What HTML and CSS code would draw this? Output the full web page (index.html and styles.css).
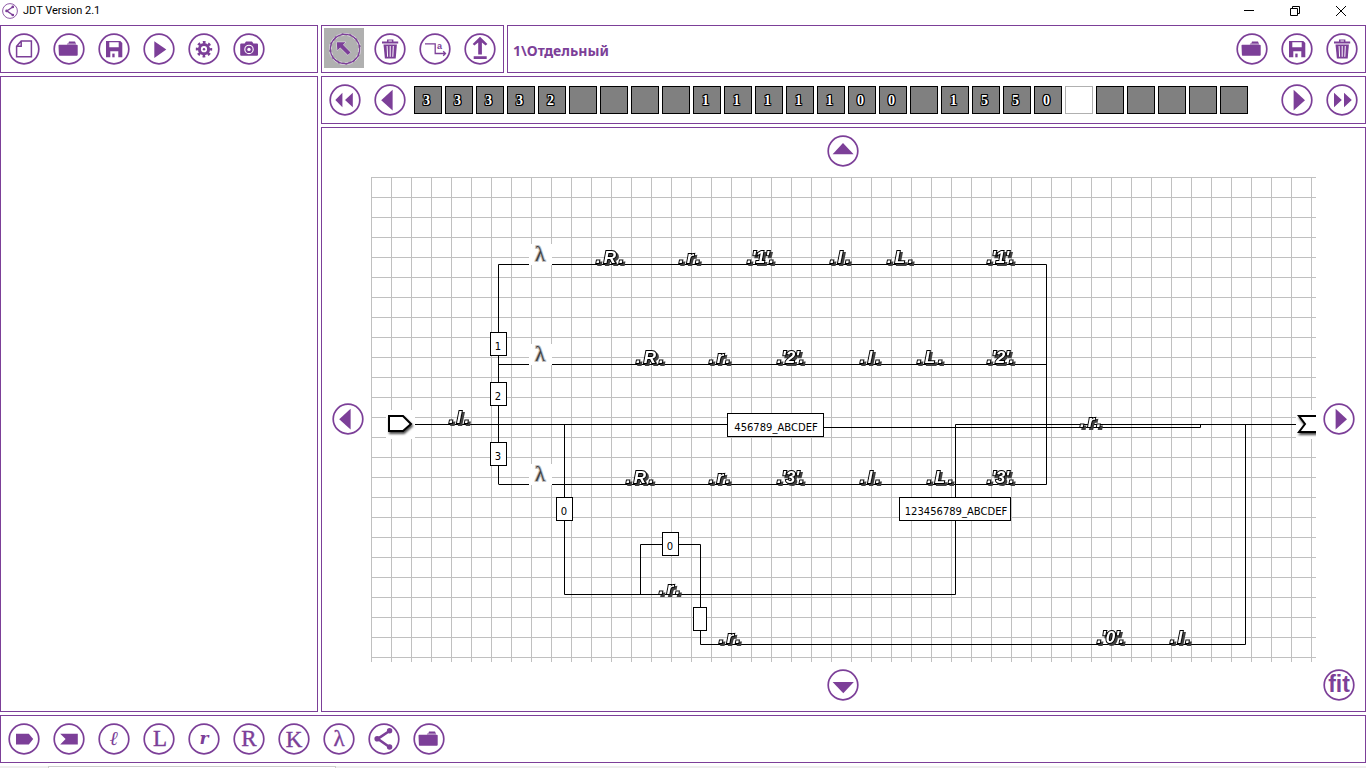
FILE: index.html
```html
<!DOCTYPE html>
<html lang="ru">
<head>
<meta charset="utf-8">
<title>JDT Version 2.1</title>
<link rel="stylesheet" href="styles.css">
</head>
<body>
<svg class="sprite" aria-hidden="true">
  <symbol id="ring" viewBox="0 0 32 32"><circle class="line" cx="16" cy="16" r="14.8" stroke-width="1.7"/></symbol>
  <symbol id="file" viewBox="0 0 32 32"><path class="line" stroke-width="1.5" d="M8.6 13.2 13.2 8H23.4V23.8H8.6ZM13.2 8V13.2H8.6"/></symbol>
  <symbol id="folder" viewBox="0 0 32 32"><path d="M5.5 12.5Q5.5 11.7 6.3 11.7H23.8Q24.7 11.7 24.7 12.5V21.8Q24.7 22.8 23.8 22.8H6.8Q5.9 22.8 5.9 21.8Z"/><path opacity=".6" d="M14.3 10.2H23V11.7H13.8Z"/><path d="M15.3 10.4 16 8.6H22L22.8 10.4Z"/></symbol>
  <symbol id="save" viewBox="0 0 32 32"><path fill-rule="evenodd" d="M8 8H22.3L24.3 10V24.3H8ZM11.3 9.3V14.3H20.7V9.3ZM12.3 18.3V24.3H20.3V18.3Z"/><path d="M14.3 20.6H16.6V24.3H14.3Z"/></symbol>
  <symbol id="play" viewBox="0 0 32 32"><path d="M11.3 8.2 23.3 16.6 11.3 25Z"/></symbol>
  <symbol id="gear" viewBox="0 0 32 32"><circle class="line" cx="16" cy="16.2" r="4.6" stroke-width="3"/><circle class="line" cx="16" cy="16.2" r="6.9" stroke-width="2.6" stroke-dasharray="2.7 2.72" stroke-dashoffset="1.35"/><circle cx="16" cy="16.2" r="1.2"/></symbol>
  <symbol id="camera" viewBox="0 0 32 32"><path d="M7.2 11.6Q7.2 10.6 8.2 10.6H11.6L13 8.6H19L20.4 10.6H24Q25 10.6 25 11.6V21.8Q25 22.8 24 22.8H8.2Q7.2 22.8 7.2 21.8Z"/><circle cx="16" cy="16.4" r="4.2" fill="none" stroke="#fff" stroke-width="1.1"/><circle cx="16" cy="16.4" r="1.7" fill="#fff"/></symbol>
  <symbol id="cursor" viewBox="0 0 32 32"><circle cx="16" cy="16" r="15.7" fill="none" stroke="#fff" stroke-width=".6" stroke-dasharray="6 2"/><circle cx="16" cy="16" r="13.6" fill="none" stroke="#fff" stroke-width=".5" stroke-dasharray="3 3"/><path d="M7.7 9.2H16.6L14 11.8 21.6 19.4 18.9 22.1 11.2 14.5 8.4 17.4Z" stroke="#fff" stroke-width=".8" paint-order="stroke"/></symbol>
  <symbol id="trash" viewBox="0 0 32 32"><path d="M8 8.6H13V6.4H19.4V8.6H24.2V10.6H8ZM14.5 7.6V8.6H17.9V7.6Z" fill-rule="evenodd"/><path d="M9.5 11.6H22.9L21.7 25.4H10.9Z"/><path d="M13.1 13 13.6 23.8M16.2 13V23.8M19.3 13 18.8 23.8" fill="none" stroke="#fff" stroke-width="1"/></symbol>
  <symbol id="wire" viewBox="0 0 32 32"><path class="line" stroke-width="1.3" d="M6 10.8H16.2V20.5H26M24.2 18.3 26.5 20.5 24.2 22.7"/></symbol>
  <symbol id="upload" viewBox="0 0 32 32"><path d="M16 3.8 23.4 11 21.6 12.4 17.9 9.4V21.6H14.2V9.4L10.4 12.4 8.7 11ZM9.7 23.2H22.7V26H9.7Z"/></symbol>
  <symbol id="rewind" viewBox="0 0 32 32"><path d="M6.3 16 13.4 8.8V23.2ZM16 16 23.8 8.8V23.2Z"/></symbol>
  <symbol id="forward" viewBox="0 0 32 32"><path d="M8 8.8 15.8 16 8 23.2ZM18 8.8 25.8 16 18 23.2Z"/></symbol>
  <symbol id="left" viewBox="0 0 32 32"><path d="M18.6 5.8V26.6L7.2 16.2Z"/></symbol>
  <symbol id="right" viewBox="0 0 32 32"><path d="M12.6 5.8V26.6L24 16.2Z"/></symbol>
  <symbol id="up" viewBox="0 0 32 32"><path d="M5.6 19.2H26.6L16 8Z"/></symbol>
  <symbol id="down" viewBox="0 0 32 32"><path d="M5.6 13H26.8L16.3 24.2Z"/></symbol>
  <symbol id="entry" viewBox="0 0 32 32"><path d="M8 10.8H20.8L25.2 16 20.8 21.4H8Z"/></symbol>
  <symbol id="exit" viewBox="0 0 32 32"><path d="M7.2 10.8H24.8V21.4H7.2L12.6 16Z"/></symbol>
  <symbol id="share" viewBox="0 0 32 32"><path class="line" stroke-width="2.6" d="M21.4 8 9.7 15.8 21.4 24"/><circle cx="9.2" cy="15.8" r="2.8"/><circle cx="21.6" cy="7.8" r="2.7"/><circle cx="21.6" cy="24" r="2.7"/></symbol>
</svg>

<header class="titlebar">
  <svg class="app-icon" aria-hidden="true"><use href="#ring"/><use href="#share"/></svg>
  <h1 class="app-title">JDT Version 2.1</h1>
  <div class="window-controls">
    <button class="window-btn" aria-label="Свернуть"><svg class="window-glyph"><path d="M0 4.5H10"/></svg></button>
    <button class="window-btn" aria-label="Восстановить"><svg class="window-glyph"><path d="M.5 2.5H7.5V9.5H.5ZM2.5 2.5V.5H9.5V7.5H7.5"/></svg></button>
    <button class="window-btn" aria-label="Закрыть"><svg class="window-glyph"><path d="M0 0 10 10M10 0 0 10"/></svg></button>
  </div>
</header>

<main class="workspace">
  <section class="panel toolbar project-tools">
    <button class="tool" aria-label="Создать"><svg class="icon"><use href="#ring"/><use href="#file"/></svg></button>
    <button class="tool" aria-label="Открыть"><svg class="icon"><use href="#ring"/><use href="#folder"/></svg></button>
    <button class="tool" aria-label="Сохранить"><svg class="icon"><use href="#ring"/><use href="#save"/></svg></button>
    <button class="tool" aria-label="Запуск"><svg class="icon"><use href="#ring"/><use href="#play"/></svg></button>
    <button class="tool" aria-label="Настройки"><svg class="icon"><use href="#ring"/><use href="#gear"/></svg></button>
    <button class="tool" aria-label="Снимок"><svg class="icon"><use href="#ring"/><use href="#camera"/></svg></button>
  </section>

  <div class="top-row">
    <section class="panel toolbar">
      <button class="tool active" aria-label="Выбор" aria-pressed="true"><svg class="icon"><use href="#ring"/><use href="#cursor"/></svg></button>
      <button class="tool" aria-label="Удалить"><svg class="icon"><use href="#ring"/><use href="#trash"/></svg></button>
      <button class="tool" aria-label="Связь"><svg class="icon"><use href="#ring"/><use href="#wire"/><text class="tiny" x="18" y="16">a</text></svg></button>
      <button class="tool" aria-label="Вверх"><svg class="icon"><use href="#ring"/><use href="#upload"/></svg></button>
    </section>
    <section class="panel toolbar machine">
      <h2 class="machine-name">1\Отдельный</h2>
      <button class="tool" aria-label="Открыть машину"><svg class="icon"><use href="#ring"/><use href="#folder"/></svg></button>
      <button class="tool" aria-label="Сохранить машину"><svg class="icon"><use href="#ring"/><use href="#save"/></svg></button>
      <button class="tool" aria-label="Удалить машину"><svg class="icon"><use href="#ring"/><use href="#trash"/></svg></button>
    </section>
  </div>

  <aside class="panel tree"></aside>

  <section class="panel toolbar tape-panel">
    <button class="tool" aria-label="Быстро назад"><svg class="icon"><use href="#ring"/><use href="#rewind"/></svg></button>
    <button class="tool" aria-label="Назад"><svg class="icon"><use href="#ring"/><use href="#left"/></svg></button>
    <ol class="tape">
      <li class="cell">3</li><li class="cell">3</li><li class="cell">3</li><li class="cell">3</li><li class="cell">2</li>
      <li class="cell"></li><li class="cell"></li><li class="cell"></li><li class="cell"></li>
      <li class="cell">1</li><li class="cell">1</li><li class="cell">1</li><li class="cell">1</li><li class="cell">1</li>
      <li class="cell">0</li><li class="cell">0</li><li class="cell"></li><li class="cell">1</li>
      <li class="cell">5</li><li class="cell">5</li><li class="cell">0</li><li class="cell head"></li>
      <li class="cell"></li><li class="cell"></li><li class="cell"></li><li class="cell"></li><li class="cell"></li>
    </ol>
    <button class="tool" aria-label="Вперёд"><svg class="icon"><use href="#ring"/><use href="#right"/></svg></button>
    <button class="tool" aria-label="Быстро вперёд"><svg class="icon"><use href="#ring"/><use href="#forward"/></svg></button>
  </section>

  <section class="panel editor">
    <button class="tool pan pan-up" aria-label="Сдвиг вверх"><svg class="icon"><use href="#ring"/><use href="#up"/></svg></button>
    <button class="tool pan pan-left" aria-label="Сдвиг влево"><svg class="icon"><use href="#ring"/><use href="#left"/></svg></button>
    <div class="canvas">
      <svg class="diagram" role="img" aria-label="Диаграмма машины">
        <path class="wires" d="M44 247.5H356M127.5 307V87.5H675.5V307.5H127.5M127 187.5H675M453 250.5H829.5V247M193.5 247V417.5H584.5V247.5H925M269.5 417V367.5H329.5V467.5H874.5V247"/>

        <g class="boxes">
          <rect x="119.5" y="155.5" width="16" height="23"/>
          <rect x="119.5" y="205.5" width="16" height="23"/>
          <rect x="119.5" y="265.5" width="16" height="23"/>
          <rect x="185.5" y="320.5" width="16" height="23"/>
          <rect x="291.5" y="355.5" width="16" height="23"/>
          <rect x="322.5" y="430.5" width="13" height="23"/>
          <rect x="356.5" y="236.5" width="96" height="23"/>
          <rect x="528.5" y="320.5" width="111" height="23"/>
        </g>
        <g class="box-text">
          <text x="127" y="173">1</text>
          <text x="127" y="223">2</text>
          <text x="127" y="283">3</text>
          <text x="193" y="338">0</text>
          <text x="299" y="373">0</text>
          <text x="405" y="254">456789_ABCDEF</text>
          <text x="585" y="338">123456789_ABCDEF</text>
        </g>

        <g class="patches">
          <rect x="158" y="67" width="23" height="21"/>
          <rect x="158" y="167" width="23" height="21"/>
          <rect x="158" y="287" width="23" height="21"/>
          <rect x="15" y="233" width="29" height="29"/>
          <rect x="925" y="233" width="20" height="29"/>
        </g>
        <g class="lambdas">
          <text x="169" y="84">λ</text>
          <text x="169" y="184">λ</text>
          <text x="169" y="304">λ</text>
        </g>
        <path class="terminal" d="M18 239H32L40 247 32 254H18Z"/>
        <path class="terminal" d="M950 239H928L934 247 928 255H950"/>

        <g class="ops">
          <text x="225" y="86">.<tspan dx="3">R</tspan><tspan dx="3">.</tspan></text>
          <text x="308" y="86">.<tspan dx="3">r</tspan><tspan dx="3">.</tspan></text>
          <text x="376" y="86">.'1'.</text>
          <text x="459" y="86">.<tspan dx="3">l</tspan><tspan dx="3">.</tspan></text>
          <text x="516" y="86">.<tspan dx="3">L</tspan><tspan dx="3">.</tspan></text>
          <text x="616" y="86">.'1'.</text>

          <text x="265" y="186">.<tspan dx="3">R</tspan><tspan dx="3">.</tspan></text>
          <text x="338" y="186">.<tspan dx="3">r</tspan><tspan dx="3">.</tspan></text>
          <text x="406" y="186">.'2'.</text>
          <text x="489" y="186">.<tspan dx="3">l</tspan><tspan dx="3">.</tspan></text>
          <text x="546" y="186">.<tspan dx="3">L</tspan><tspan dx="3">.</tspan></text>
          <text x="616" y="186">.'2'.</text>

          <text x="78" y="246">.<tspan dx="3">l</tspan><tspan dx="3">.</tspan></text>
          <text x="709" y="250">.<tspan dx="3">r</tspan><tspan dx="3">.</tspan></text>

          <text x="255" y="306">.<tspan dx="3">R</tspan><tspan dx="3">.</tspan></text>
          <text x="338" y="306">.<tspan dx="3">r</tspan><tspan dx="3">.</tspan></text>
          <text x="406" y="306">.'3'.</text>
          <text x="489" y="306">.<tspan dx="3">l</tspan><tspan dx="3">.</tspan></text>
          <text x="556" y="306">.<tspan dx="3">L</tspan><tspan dx="3">.</tspan></text>
          <text x="616" y="306">.'3'.</text>

          <text x="288" y="417">.<tspan dx="3">r</tspan><tspan dx="3">.</tspan></text>
          <text x="348" y="466">.<tspan dx="3">r</tspan><tspan dx="3">.</tspan></text>
          <text x="726" y="466">.'0'.</text>
          <text x="799" y="466">.<tspan dx="3">l</tspan><tspan dx="3">.</tspan></text>
        </g>
      </svg>
    </div>
    <button class="tool pan pan-right" aria-label="Сдвиг вправо"><svg class="icon"><use href="#ring"/><use href="#right"/></svg></button>
    <button class="tool pan pan-down" aria-label="Сдвиг вниз"><svg class="icon"><use href="#ring"/><use href="#down"/></svg></button>
    <button class="tool pan fit"><svg class="icon"><use href="#ring"/><text class="fit-text" x="16" y="23">fit</text></svg></button>
  </section>

  <section class="panel toolbar palette">
    <button class="tool" aria-label="Вход"><svg class="icon"><use href="#ring"/><use href="#entry"/></svg></button>
    <button class="tool" aria-label="Выход"><svg class="icon"><use href="#ring"/><use href="#exit"/></svg></button>
    <button class="tool"><svg class="icon"><use href="#ring"/><text class="script" x="16" y="22">ℓ</text></svg></button>
    <button class="tool"><svg class="icon"><use href="#ring"/><text class="serif" x="17" y="23">L</text></svg></button>
    <button class="tool"><svg class="icon"><use href="#ring"/><text class="script small" x="16" y="21">r</text></svg></button>
    <button class="tool"><svg class="icon"><use href="#ring"/><text class="serif" x="16" y="23">R</text></svg></button>
    <button class="tool"><svg class="icon"><use href="#ring"/><text class="serif" x="16" y="24">K</text></svg></button>
    <button class="tool"><svg class="icon"><use href="#ring"/><text class="serif" x="16" y="23">λ</text></svg></button>
    <button class="tool" aria-label="Ветвление"><svg class="icon"><use href="#ring"/><use href="#share"/></svg></button>
    <button class="tool" aria-label="Машина из файла"><svg class="icon"><use href="#ring"/><use href="#folder"/></svg></button>
  </section>
</main>

<footer class="desktop-edge"><div class="search-edge"></div></footer>
</body>
</html>
```
FILE: styles.css
```css
:root {
  --accent: #7c3f98;
  --sans: "Liberation Sans", Arial, sans-serif;
  --serif: "Liberation Serif", "Times New Roman", serif;
}

* { box-sizing: border-box; }

body {
  margin: 0;
  height: 100vh;
  display: flex;
  flex-direction: column;
  overflow: hidden;
  background: #fff;
  font-family: var(--sans);
}

button {
  padding: 0;
  border: 0;
  background: none;
}

.sprite {
  position: absolute;
  width: 0;
  height: 0;
}

.line {
  fill: none;
  stroke: var(--accent);
}

/* Title bar */
.titlebar {
  display: flex;
  align-items: center;
  gap: 5px;
  height: 22px;
  margin-bottom: 3px;
  padding-left: 2px;
}

.app-icon {
  width: 16px;
  height: 16px;
  fill: var(--accent);
}

.app-title {
  margin: 0;
  font: 11px/20px Roboto, sans-serif;
  color: #000;
}

.window-controls {
  display: flex;
  margin-left: auto;
  padding-right: 2px;
}

.window-btn {
  display: grid;
  place-items: center;
  width: 46px;
  height: 20px;
}

.window-glyph {
  width: 10px;
  height: 10px;
  fill: none;
  stroke: #000;
}

/* Panels */
.workspace {
  flex: 1;
  min-height: 0;
  display: grid;
  grid-template-columns: 318px 1fr;
  grid-template-rows: 48px 48px 1fr 48px;
  gap: 3px;
}

.panel {
  min-width: 0;
  min-height: 0;
  border: 1px solid var(--accent);
}

.top-row {
  display: grid;
  grid-template-columns: 183px 1fr;
  gap: 3px;
}

.tree { grid-row: 2 / 4; }

.palette { grid-column: 1 / -1; }

.toolbar {
  display: flex;
  align-items: flex-start;
  gap: 5px;
  padding: 2px 4px 2px 2px;
}

.tool {
  flex: none;
  width: 40px;
  height: 40px;
  padding: 5px 3px 3px 5px;
}

.active { background: #b0b0b0; }

.icon {
  display: block;
  width: 32px;
  height: 32px;
  fill: var(--accent);
}

.tiny { font: bold 9px var(--sans); }

.serif,
.script,
.fit-text { text-anchor: middle; }

.serif {
  font: 23px var(--serif);
  stroke: var(--accent);
  stroke-width: 0.4px;
}

.script { font: italic bold 20px "DejaVu Serif", serif; }

.small { font-size: 17px; }

.fit-text { font: bold 23px var(--sans); }

.machine-name {
  flex: 1;
  margin: 0;
  padding-left: 3px;
  font: bold 14px/46px "Noto Sans", sans-serif;
  color: var(--accent);
}

/* Tape */
.tape {
  flex: 1;
  display: flex;
  gap: 3px;
  margin: 0;
  padding: 7px 0 0;
  list-style: none;
}

.cell {
  width: 28px;
  height: 28px;
  padding-right: 3px;
  border: 1px solid #000;
  background: #808080;
  color: #fff;
  font: bold 14px/28px var(--serif);
  text-align: center;
  text-shadow: 1px 0 #000, -1px 0 #000, 0 1px #000, 0 -1px #000,
    1px 1px #000, -1px -1px #000, 1px -1px #000, -1px 1px #000;
}

.head {
  border-color: #b0b0b0;
  background: #fff;
}

/* Diagram editor */
.editor {
  display: grid;
  grid-template-columns: 49px 1fr 49px;
  grid-template-rows: 49px 1fr 49px;
}

.canvas {
  grid-area: 2 / 2;
  min-width: 0;
  min-height: 0;
  background:
    linear-gradient(90deg, #c0c0c0 1px, transparent 1px) 0 0 / 20px 20px,
    linear-gradient(#c0c0c0 1px, transparent 1px) 0 0 / 20px 20px;
}

.pan { padding: 3px 5px 5px 3px; }
.pan-up { grid-area: 1 / 2; place-self: start center; margin-top: 4px; }
.pan-left { grid-area: 2 / 1; place-self: center end; margin-right: 2px; }
.pan-right { grid-area: 2 / 3; place-self: center start; margin-left: 4px; }
.pan-down { grid-area: 3 / 2; place-self: start center; margin-top: 4px; }
.fit { grid-area: 3 / 3; place-self: start; margin: 4px 0 0 4px; }

.diagram {
  display: block;
  width: 100%;
  height: 100%;
  overflow: hidden;
}

.wires {
  fill: none;
  stroke: #000;
}

.boxes {
  fill: #fff;
  stroke: #000;
}

.box-text {
  font: 10px "DejaVu Sans", sans-serif;
  text-anchor: middle;
}

.patches { fill: #fff; }

.lambdas {
  font: 21px var(--serif);
  text-anchor: middle;
  fill: #404040;
  stroke: #c0c0c0;
  stroke-width: 2px;
  paint-order: stroke;
}

.terminal {
  fill: #fff;
  stroke: #000;
  stroke-width: 2px;
  filter: drop-shadow(1px 2px 1px rgba(0, 0, 0, 0.7));
}

.ops {
  font: italic bold 17px var(--sans);
  fill: #fff;
  stroke: #000;
  stroke-width: 2px;
  paint-order: stroke;
  filter: drop-shadow(2px 2px 0 #404040);
}

/* Strip of the desktop under the window */
.desktop-edge {
  height: 2px;
  margin-top: 3px;
  padding-left: 48px;
  background: #eee;
}

.search-edge {
  width: 288px;
  height: 2px;
  border: 1px solid #ccc;
  border-bottom: 0;
  background: #fff;
}
```
